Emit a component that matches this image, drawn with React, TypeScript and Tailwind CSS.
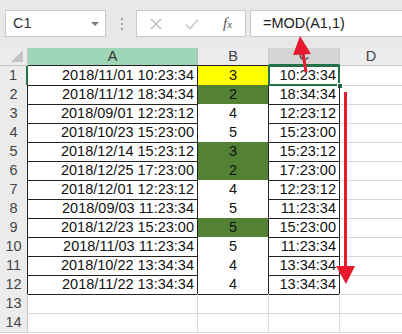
import React from 'react';

type Fill = 'none' | 'yellow' | 'green';

const rows: { a: string; b: string; c: string; fill: Fill }[] = [
  { a: '2018/11/01 10:23:34', b: '3', c: '10:23:34', fill: 'yellow' },
  { a: '2018/11/12 18:34:34', b: '2', c: '18:34:34', fill: 'green' },
  { a: '2018/09/01 12:23:12', b: '4', c: '12:23:12', fill: 'none' },
  { a: '2018/10/23 15:23:00', b: '5', c: '15:23:00', fill: 'none' },
  { a: '2018/12/14 15:23:12', b: '3', c: '15:23:12', fill: 'green' },
  { a: '2018/12/25 17:23:00', b: '2', c: '17:23:00', fill: 'green' },
  { a: '2018/12/01 12:23:12', b: '4', c: '12:23:12', fill: 'none' },
  { a: '2018/09/03 11:23:34', b: '5', c: '11:23:34', fill: 'none' },
  { a: '2018/12/23 15:23:00', b: '5', c: '15:23:00', fill: 'green' },
  { a: '2018/11/03 11:23:34', b: '5', c: '11:23:34', fill: 'none' },
  { a: '2018/10/22 13:34:34', b: '4', c: '13:34:34', fill: 'none' },
  { a: '2018/11/22 13:34:34', b: '4', c: '13:34:34', fill: 'none' },
];

const fillClass: Record<Fill, string> = {
  none: 'bg-white',
  yellow: 'bg-[#ffff00]',
  green: 'bg-[#548235]',
};

const FormulaBar = () => (
  <div className="flex h-[48px] items-start bg-[#e8e8e8] pt-[10px] pl-[5px]">
    {/* name box */}
    <div className="flex h-[27px] w-[101px] items-center justify-between border border-[#c9c9c9] bg-white pl-[7px] pr-[6px]">
      <span className="text-[14.5px] text-[#333]">C1</span>
      <span className="h-0 w-0 border-x-[4px] border-t-[4px] border-x-transparent border-t-[#7a7a7a]" />
    </div>
    {/* grip dots */}
    <div className="ml-[15px] mt-[8px] flex flex-col gap-[3px]">
      <span className="h-[2px] w-[2px] bg-[#a0a0a0]" />
      <span className="h-[2px] w-[2px] bg-[#a0a0a0]" />
      <span className="h-[2px] w-[2px] bg-[#a0a0a0]" />
    </div>
    {/* cancel / enter / fx */}
    <div className="ml-[13px] flex h-[27px] w-[110px] items-center border border-[#c9c9c9] bg-white">
      <svg width="12" height="12" viewBox="0 0 12 12" className="ml-[13px]">
        <path d="M1 1 L11 11 M11 1 L1 11" stroke="#b8b8b8" strokeWidth="1.3" fill="none" />
      </svg>
      <svg width="14" height="12" viewBox="0 0 14 12" className="ml-[23px]">
        <path d="M1 6.5 L5 10.5 L13 1.5" stroke="#c8c8c8" strokeWidth="1.6" fill="none" />
      </svg>
      <span
        className="ml-[24px] text-[15px] italic text-[#555]"
        style={{ fontFamily: '"Liberation Serif", serif' }}
      >
        f<span className="text-[11px]">x</span>
      </span>
    </div>
    {/* formula */}
    <div className="ml-[4px] flex h-[27px] flex-1 items-center border border-r-0 border-[#c9c9c9] bg-white pl-[12px]">
      <span className="text-[14.5px] text-[#222]">=MOD(A1,1)</span>
    </div>
  </div>
);

export default function App() {
  return (
    <div
      className="relative h-[334px] w-[402px] overflow-hidden bg-white"
      style={{ fontFamily: '"Liberation Sans", Arial, sans-serif' }}
    >
      <FormulaBar />

      <div className="grid grid-cols-[28px_170px_71px_71px_1fr] auto-rows-[19px] text-[14.5px]">
        {/* header row */}
        <div className="relative h-[18px] border-r border-b border-[#c8c8c8] bg-[#ececec]">
          <svg width="12" height="12" viewBox="0 0 12 12" className="absolute right-[4px] bottom-[3px]">
            <path d="M12 0 L12 12 L0 12 Z" fill="#c4c4c4" />
          </svg>
        </div>
        <div className="flex h-[18px] items-center justify-center border-r border-b border-r-[#b8b8b8] border-b-[#222] bg-[#9fd5b7] text-[#333]">
          A
        </div>
        <div className="flex h-[18px] items-center justify-center border-r border-b border-r-[#c8c8c8] border-b-[#222] bg-[#ececec] text-[#444]">
          B
        </div>
        <div className="flex h-[18px] items-center justify-center border-r border-b-2 border-r-[#c8c8c8] border-b-[#217346] bg-[#d4d4d4] text-[#444]">
          C
        </div>
        <div className="flex h-[18px] items-center justify-center border-b border-[#c8c8c8] bg-[#ececec] text-[#444]">
          D
        </div>

        {Array.from({ length: 14 }).map((_, i) => {
          const r = rows[i];
          const n = i + 1;
          const rowHeadBorder =
            n === 1 ? 'border-r-2 border-r-[#217346]' : r ? 'border-r border-r-[#222]' : 'border-r border-r-[#c8c8c8]';
          const cellBorder = r ? 'border-r border-b border-[#222]' : 'border-r border-b border-[#d9d9d9]';
          return (
            <React.Fragment key={n}>
              <div
                className={`-mt-px flex items-center justify-center border-b border-b-[#d0d0d0] bg-[#ececec] text-[#444] ${rowHeadBorder}`}
              >
                {n}
              </div>
              <div className={`-mt-px flex items-center justify-end pr-[3px] text-[#111] ${cellBorder}`}>
                {r?.a}
              </div>
              <div
                className={`-mt-px flex items-center justify-center text-[#111] ${cellBorder} ${r ? fillClass[r.fill] : ''}`}
              >
                {r?.b}
              </div>
              <div
                className={`relative -mt-px flex items-center justify-end pr-[3px] text-[#111] ${cellBorder}`}
              >
                {r?.c}
                {n === 1 && (
                  <>
                    <span className="pointer-events-none absolute -top-px -left-px -right-px -bottom-px border-2 border-[#217346]" />
                    <span className="absolute -right-[4px] -bottom-[4px] h-[6px] w-[6px] border border-white bg-[#217346]" />
                  </>
                )}
              </div>
              <div className="-mt-px border-b border-[#d9d9d9]" />
            </React.Fragment>
          );
        })}
      </div>

      {/* red annotation arrows */}
      <svg className="pointer-events-none absolute left-0 top-0" width="402" height="334" viewBox="0 0 402 334">
        <path d="M306 72 L302.5 50" stroke="#e8192c" strokeWidth="3" fill="none" />
        <path d="M300 36 L311 54 L293 55 Z" fill="#e8192c" />
        <path d="M345.5 92 L345.5 268" stroke="#e8192c" strokeWidth="3" fill="none" />
        <path d="M336 266 L355 266 L346 284 Z" fill="#e8192c" />
      </svg>
    </div>
  );
}
